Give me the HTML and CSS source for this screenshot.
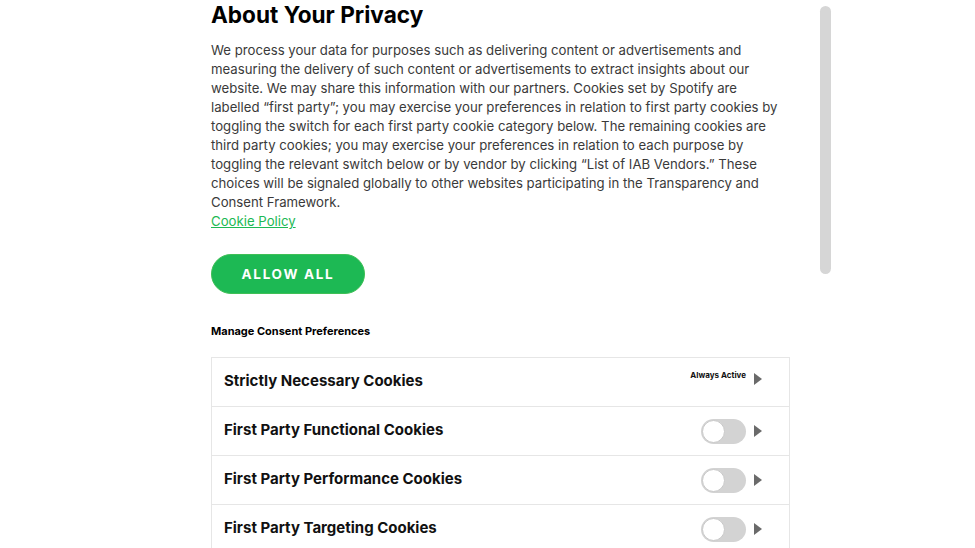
FILE: index.html
```html
<!DOCTYPE html>
<html>
<head>
<meta charset="utf-8">
<link rel="stylesheet" href="styles.css">
</head>
<body>
<div class="page">
  <div class="content">
    <h2 class="title">About Your Privacy</h2>
    <p class="desc">We process your data for purposes such as delivering content or advertisements and measuring the delivery of such content or advertisements to extract insights about our website. We may share this information with our partners. Cookies set by Spotify are labelled “first party”; you may exercise your preferences in relation to first party cookies by toggling the switch for each first party cookie category below. The remaining cookies are third party cookies; you may exercise your preferences in relation to each purpose by toggling the relevant switch below or by vendor by clicking “List of IAB Vendors.” These choices will be signaled globally to other websites participating in the Transparency and Consent Framework.<br><a class="policy" href="#">Cookie Policy</a></p>
    <button class="allow">ALLOW ALL</button>
    <h3 class="manage">Manage Consent Preferences</h3>
    <div class="list">
      <div class="row">
        <span class="name">Strictly Necessary Cookies</span>
        <div class="ctrl top">
          <span class="always">Always Active</span>
          <span class="arrow"></span>
        </div>
      </div>
      <div class="row">
        <span class="name">First Party Functional Cookies</span>
        <div class="ctrl">
          <span class="toggle"><span class="knob"></span></span>
          <span class="arrow"></span>
        </div>
      </div>
      <div class="row">
        <span class="name">First Party Performance Cookies</span>
        <div class="ctrl">
          <span class="toggle"><span class="knob"></span></span>
          <span class="arrow"></span>
        </div>
      </div>
      <div class="row">
        <span class="name">First Party Targeting Cookies</span>
        <div class="ctrl">
          <span class="toggle"><span class="knob"></span></span>
          <span class="arrow"></span>
        </div>
      </div>
    </div>
  </div>
  <div class="track"><div class="thumb"></div></div>
</div>
</body>
</html>
```

FILE: styles.css
```css
html, body {
  margin: 0;
  padding: 0;
  background: #fff;
  overflow: hidden;
  height: 548px;
}
body {
  font-family: Inter, "Noto Sans", sans-serif;
}
.page {
  display: flex;
  padding-left: 211px;
}
.content {
  width: 579px;
}
.title {
  margin: 0;
  padding-top: 1px;
  font-size: 22.6px;
  line-height: 28px;
  font-weight: 700;
  color: #000;
}
.desc {
  margin: 12px 0 0;
  width: 575px;
  font-size: 13.2px;
  line-height: 19px;
  color: #3a3a3a;
}
.policy {
  color: #1db954;
  text-decoration: underline;
}
.allow {
  display: block;
  margin-top: 23px;
  width: 154px;
  height: 40px;
  border: 1px solid #3fbf56;
  border-radius: 20px;
  background: #1db954;
  color: #fff;
  font-family: Inter, "Noto Sans", sans-serif;
  font-weight: 700;
  font-size: 13.5px;
  letter-spacing: 1.7px;
  padding: 0;
}
.manage {
  margin: 30px 0 0;
  font-size: 11px;
  line-height: 14px;
  font-weight: 700;
  color: #000;
}
.list {
  margin-top: 19px;
  border: 1px solid #e6e6e6;
  border-bottom: none;
}
.row {
  display: flex;
  justify-content: space-between;
  align-items: center;
  height: 48px;
  padding: 0 27px 0 12px;
  border-bottom: 1px solid #e6e6e6;
}
.name {
  font-size: 15px;
  font-weight: 700;
  color: #111;
  margin-top: -3px;
}
.ctrl {
  display: flex;
  align-items: center;
  gap: 8px;
}
.ctrl.top {
  align-self: flex-start;
  margin-top: 15px;
}
.always {
  font-size: 8px;
  font-weight: 700;
  color: #111;
  margin-top: -8px;
}
.arrow {
  width: 0;
  height: 0;
  border-left: 8px solid #6a6a6a;
  border-top: 6px solid transparent;
  border-bottom: 6px solid transparent;
}
.toggle {
  display: block;
  width: 45px;
  height: 25px;
  border-radius: 13px;
  background: #d3d3d3;
  position: relative;
}
.knob {
  position: absolute;
  left: 1px;
  top: 1px;
  width: 21px;
  height: 21px;
  border-radius: 50%;
  background: #fff;
  border: 1px solid #c8c8c8;
}
.track {
  margin-left: 30px;
  padding-top: 6px;
}
.thumb {
  width: 11px;
  height: 268px;
  border-radius: 6px;
  background: #d6d6d6;
}
```
